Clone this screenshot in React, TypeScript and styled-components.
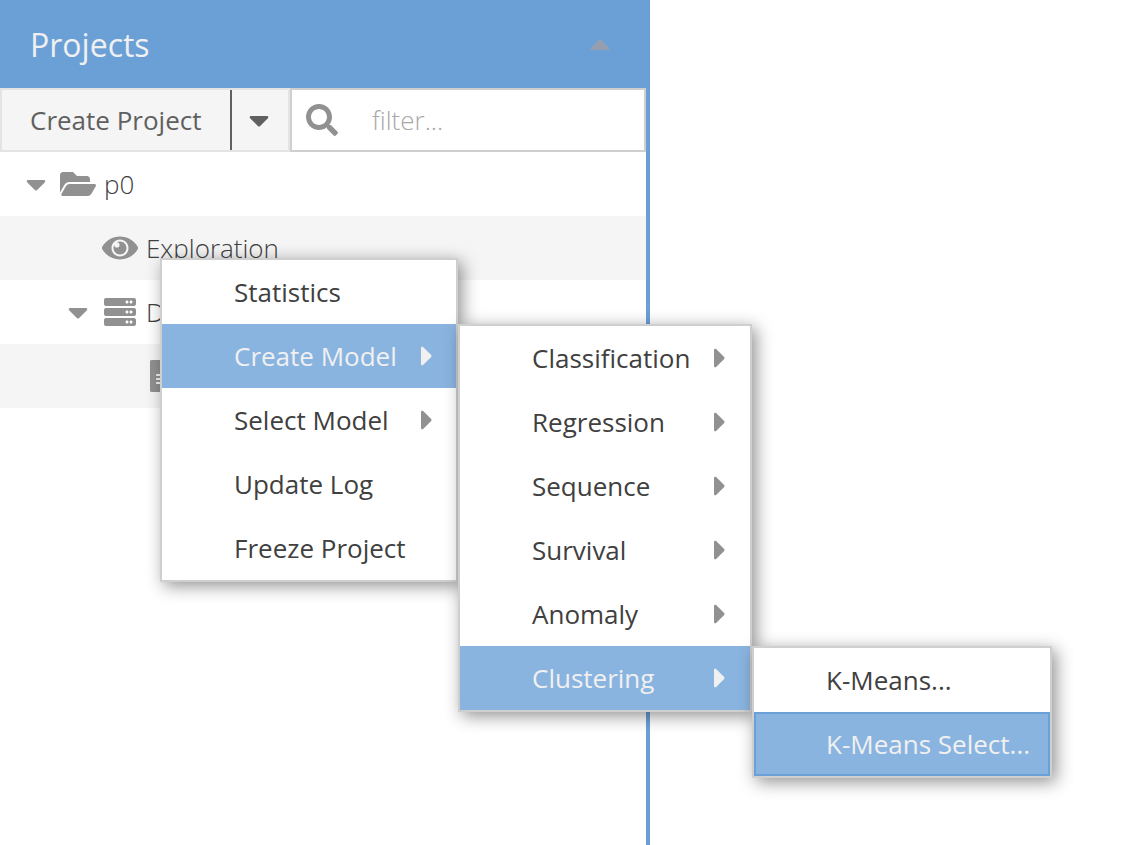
import React from "react";
import styled, { createGlobalStyle, css } from "styled-components";
import {
  FaCaretDown,
  FaCaretRight,
  FaCaretUp,
  FaFileAlt,
  FaFolderOpen,
  FaSearch,
  FaServer,
} from "react-icons/fa";

const GlobalStyle = createGlobalStyle`
  * { box-sizing: border-box; }
  body {
    margin: 0;
    background: #fff;
    overflow: hidden;
    font-family: "Open Sans", sans-serif;
    font-size: 26px;
    color: #404040;
  }
`;

const Page = styled.div`
  position: relative;
  height: 845px;
`;

const Panel = styled.section`
  display: flex;
  flex-direction: column;
  width: 650px;
  height: 100%;
  border-right: 4px solid #6ba0d7;
`;

const PanelHeader = styled.header`
  display: flex;
  align-items: center;
  justify-content: space-between;
  height: 88px;
  padding: 0 36px 0 30px;
  background: #6ba0d7;
`;

const Title = styled.h1`
  margin: 0;
  padding-top: 1px;
  font-size: 32px;
  font-weight: 400;
  line-height: 45px;
  color: #f0f0f0;
`;

const Glyph = styled.span<{ $w?: number; $color?: string }>`
  display: flex;
  flex: none;
  color: ${(p) => p.$color ?? "#919191"};
  svg {
    width: ${(p) => p.$w ?? 32}px;
    height: 32px;
  }
`;

const Toolbar = styled.div`
  display: flex;
  height: 64px;
`;

const SplitButton = styled.div`
  display: flex;
  width: 290px;
  border: 2px solid #e4e4e4;
  background: #f5f5f5;
  color: #606060;
`;

const ButtonLabel = styled.button`
  width: 230px;
  padding: 0 0 0 28px;
  border: 0;
  border-right: 2px solid #606060;
  background: none;
  color: inherit;
  font: inherit;
  line-height: 60px;
  text-align: left;
`;

const ButtonArrow = styled.button`
  display: flex;
  flex: 1;
  align-items: center;
  padding: 0 0 0 17px;
  border: 0;
  background: none;
`;

const Filter = styled.label`
  display: flex;
  flex: 1;
  align-items: center;
  gap: 34px;
  padding-left: 14px;
  border: 2px solid #cfcfcf;
  background: #fff;
`;

const FilterInput = styled.input`
  width: 240px;
  padding: 0;
  border: 0;
  outline: 0;
  font: 300 26px/36px "Open Sans", sans-serif;
  &::placeholder {
    color: #a8a8a8;
    opacity: 1;
  }
`;

const Row = styled.div<{ $level: number; $alt?: boolean }>`
  display: flex;
  align-items: center;
  height: 64px;
  padding-left: ${(p) => 20 + p.$level * 42}px;
  background: ${(p) => (p.$alt ? "#f5f5f5" : "#fff")};
  font-weight: 300;
`;

const Slot = styled.span<{ $w: number; $gap: number }>`
  display: flex;
  justify-content: center;
  width: ${(p) => p.$w}px;
  margin-right: ${(p) => p.$gap}px;
`;

const MenuBox = styled.ul<{ $x: number; $y: number; $w: number }>`
  position: absolute;
  left: ${(p) => p.$x}px;
  top: ${(p) => p.$y}px;
  width: ${(p) => p.$w}px;
  margin: 0;
  padding: 0;
  border: 2px solid #cfcfcf;
  background: #fff;
  box-shadow: 4px 4px 16px rgba(0, 0, 0, 0.43);
  list-style: none;
`;

const Item = styled.li<{ $active?: boolean; $focused?: boolean; $end: number }>`
  display: flex;
  align-items: center;
  justify-content: space-between;
  height: 64px;
  padding: 0 ${(p) => p.$end}px 0 72px;
  white-space: nowrap;
  ${(p) =>
    p.$active &&
    css`
      background: #8ab4e0;
      color: #f0f0f0;
    `}
  ${(p) =>
    p.$focused &&
    css`
      box-shadow: inset 0 0 0 2px #6ba0d7;
    `}
`;

type Entry = { label: string; sub?: boolean; active?: boolean; focused?: boolean };

const mainMenu: Entry[] = [
  { label: "Statistics" },
  { label: "Create Model", sub: true, active: true },
  { label: "Select Model", sub: true },
  { label: "Update Log" },
  { label: "Freeze Project" },
];

const modelMenu: Entry[] = [
  { label: "Classification", sub: true },
  { label: "Regression", sub: true },
  { label: "Sequence", sub: true },
  { label: "Survival", sub: true },
  { label: "Anomaly", sub: true },
  { label: "Clustering", sub: true, active: true },
];

const clusterMenu: Entry[] = [
  { label: "K-Means..." },
  { label: "K-Means Select...", active: true, focused: true },
];

type MenuProps = { entries: Entry[]; x: number; y: number; w: number; end?: number };

function Menu({ entries, x, y, w, end = 18 }: MenuProps) {
  return (
    <MenuBox $x={x} $y={y} $w={w}>
      {entries.map((e) => (
        <Item key={e.label} $active={e.active} $focused={e.focused} $end={end}>
          {e.label}
          {e.sub && (
            <Glyph $w={12} $color={e.active ? "#f0f0f0" : undefined}>
              <FaCaretRight />
            </Glyph>
          )}
        </Item>
      ))}
    </MenuBox>
  );
}

function EyeIcon() {
  return (
    <svg viewBox="0 0 576 512" fill="currentColor">
      <path d="M569.354 231.631C512.969 135.949 407.81 72 288 72 168.14 72 63.004 135.994 6.646 231.631a47.999 47.999 0 0 0 0 48.739C63.031 376.051 168.19 440 288 440c119.86 0 224.996-63.994 281.354-159.631a47.997 47.997 0 0 0 0-48.738zM288 392c-75.162 0-136-60.827-136-136 0-75.162 60.826-136 136-136 75.162 0 136 60.826 136 136 0 75.162-60.826 136-136 136zm104-136c0 57.438-46.562 104-104 104s-104-46.562-104-104c0-17.708 4.431-34.379 12.236-48.973l-.001.032c0 23.651 19.173 42.823 42.824 42.823s42.824-19.173 42.824-42.823c0-23.651-19.173-42.824-42.824-42.824l-.032.001C253.621 156.431 270.292 152 288 152c57.438 0 104 46.562 104 104z" />
    </svg>
  );
}

type RowProps = {
  level: number;
  alt?: boolean;
  open?: boolean;
  icon: React.ReactNode;
  iconWidth: number;
  label?: string;
};

function TreeRow({ level, alt, open, icon, iconWidth, label }: RowProps) {
  return (
    <Row $level={level} $alt={alt}>
      <Slot $w={32} $gap={8}>
        {open && (
          <Glyph $w={20}>
            <FaCaretDown />
          </Glyph>
        )}
      </Slot>
      <Slot $w={36} $gap={8}>
        <Glyph $w={iconWidth}>{icon}</Glyph>
      </Slot>
      {label}
    </Row>
  );
}

export default function App() {
  return (
    <>
      <GlobalStyle />
      <Page>
        <Panel>
          <PanelHeader>
            <Title>Projects</Title>
            <Glyph $w={20} $color="#969fb0">
              <FaCaretUp />
            </Glyph>
          </PanelHeader>
          <Toolbar>
            <SplitButton>
              <ButtonLabel>Create Project</ButtonLabel>
              <ButtonArrow>
                <Glyph $w={20} $color="#606060">
                  <FaCaretDown />
                </Glyph>
              </ButtonArrow>
            </SplitButton>
            <Filter>
              <Glyph>
                <FaSearch />
              </Glyph>
              <FilterInput placeholder="filter..." />
            </Filter>
          </Toolbar>
          <TreeRow level={0} open icon={<FaFolderOpen />} iconWidth={36} label="p0" />
          <TreeRow level={1} alt icon={<EyeIcon />} iconWidth={36} label="Exploration" />
          <TreeRow level={1} open icon={<FaServer />} iconWidth={32} label="D" />
          <TreeRow level={2} alt icon={<FaFileAlt />} iconWidth={24} />
        </Panel>
        <Menu entries={mainMenu} x={160} y={258} w={298} end={23} />
        <Menu entries={modelMenu} x={458} y={324} w={294} end={24} />
        <Menu entries={clusterMenu} x={752} y={646} w={300} />
      </Page>
    </>
  );
}
